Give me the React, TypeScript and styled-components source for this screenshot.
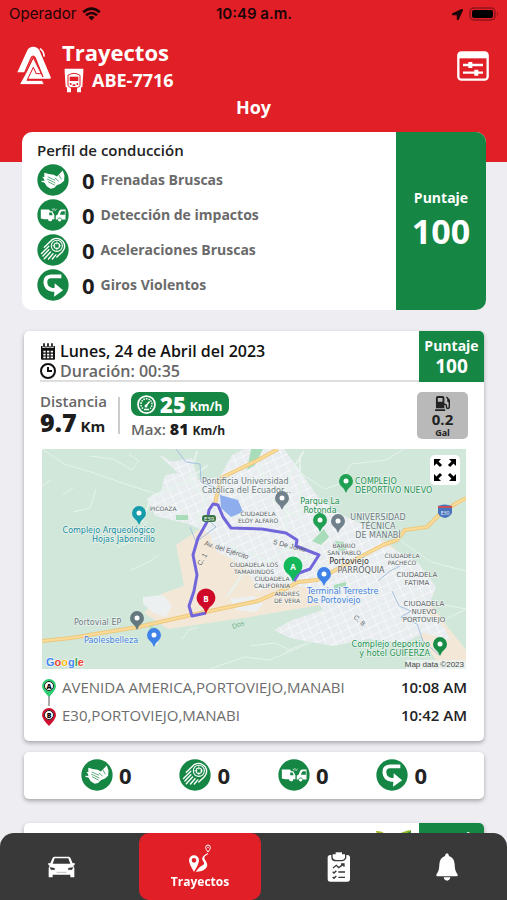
import React from 'react';
import styled, { createGlobalStyle } from 'styled-components';
import { FaLocationArrow, FaGasPump } from 'react-icons/fa';

const GREEN = '#168644';
const RED = '#e11f27';

const GlobalStyle = createGlobalStyle`
  * { box-sizing: border-box; }
  body {
    margin: 0;
    background: #ededf2;
    color: #222;
    font-family: "Open Sans", "Noto Sans", sans-serif;
  }
  h1, h2, p, ul, ol { margin: 0; padding: 0; list-style: none; }
  button { font: inherit; border: 0; padding: 0; background: none; cursor: pointer; }
  svg { display: block; flex: none; }
`;

const Header = styled.header`
  height: 162px;
  background: ${RED};
  color: #fff;
`;

const StatusBar = styled.div`
  display: grid;
  grid-template-columns: 1fr auto 1fr;
  align-items: center;
  height: 28px;
  padding: 0 8px 0 9px;
  color: #1c0506;
  font: 400 15px/28px Inter, sans-serif;
`;

const StatusGroup = styled.div<{ $end?: boolean }>`
  display: flex;
  align-items: center;
  gap: 6px;
  justify-content: ${(p) => (p.$end ? 'flex-end' : 'flex-start')};
`;

const Clock = styled.time`
  font-weight: 600;
`;

const TitleBar = styled.div`
  display: flex;
  align-items: center;
  gap: 11px;
  height: 68px;
  padding: 8px 18px 0 17px;
`;

const TitleText = styled.div`
  flex: 1;
`;

const Title = styled.h1`
  font-size: 22px;
  line-height: 28px;
  font-weight: 700;
`;

const Plate = styled.p`
  display: flex;
  align-items: center;
  gap: 8px;
  padding-left: 2px;
  font-size: 18px;
  line-height: 28px;
  font-weight: 700;
`;

const DayLabel = styled.p`
  text-align: center;
  font-size: 18px;
  line-height: 22px;
  font-weight: 700;
`;

const Main = styled.main`
  display: flex;
  flex-direction: column;
  margin-top: -30px;
  padding: 0 23px 20px 24px;
`;

const ProfileCard = styled.section`
  display: grid;
  grid-template-columns: 1fr 90px;
  margin: 0 -2px 21px;
  border-radius: 10px;
  background: #fff;
  overflow: hidden;
`;

const ProfileBody = styled.div`
  padding: 8px 15px 9px;
`;

const ProfileTitle = styled.h2`
  margin-bottom: 4px;
  font-size: 15px;
  line-height: 20px;
  font-weight: 600;
`;

const EventList = styled.ul`
  display: grid;
  gap: 3px;
`;

const EventRow = styled.li`
  display: flex;
  align-items: center;
  font-size: 14px;
  line-height: 32px;
  font-weight: 700;
  color: #6a6a6a;
`;

const Count = styled.span`
  margin: 0 6px 0 13px;
  color: #1d1d1d;
  font-size: 22px;
  line-height: 32px;
  font-weight: 700;
`;

const Score = styled.div<{ $large?: boolean }>`
  display: flex;
  flex-direction: column;
  align-items: center;
  justify-content: center;
  padding-bottom: ${(p) => (p.$large ? 4 : 2)}px;
  background: ${GREEN};
  color: #fff;
  font-weight: 700;
  font-size: 14px;
  line-height: ${(p) => (p.$large ? 24 : 20)}px;
`;

const ScoreValue = styled.strong<{ $large?: boolean }>`
  font-weight: 700;
  font-size: ${(p) => (p.$large ? 34 : 19)}px;
  line-height: ${(p) => (p.$large ? 42 : 20)}px;
`;

const Card = styled.section`
  border-radius: 5px;
  background: #fff;
  box-shadow: 0 2px 4px rgba(0, 0, 0, 0.3);
  overflow: hidden;
`;

const TripHead = styled.div`
  display: grid;
  grid-template-columns: 1fr 65px;
  grid-template-rows: 51px;
`;

const TripDate = styled.div`
  margin-left: 16px;
  padding-top: 10px;
  border-bottom: 2px solid #dedede;
`;

const HeadLine = styled.p<{ $muted?: boolean }>`
  display: flex;
  align-items: center;
  gap: 4px;
  font-size: 16px;
  line-height: 20px;
  font-weight: 600;
  color: ${(p) => (p.$muted ? '#666' : '#111')};
`;

const Metrics = styled.div`
  display: flex;
  align-items: flex-start;
  height: 67px;
  padding: 10px 16px 0;
`;

const Distance = styled.div`
  padding-right: 11px;
  color: #666;
  font-size: 15px;
  line-height: 19px;
  font-weight: 600;
`;

const Divider = styled.span`
  width: 2px;
  height: 37px;
  margin: 5px 11px 0 0;
  background: #ccc;
`;

const Reading = styled.p`
  color: #1d1d1d;
  font-size: 15px;
  line-height: 22px;
  font-weight: 700;
  strong { font-size: 25px; font-weight: 800; }
`;

const Speeds = styled.div`
  display: flex;
  flex: 1;
  flex-direction: column;
  align-items: flex-start;
  color: #666;
  font-size: 15px;
  font-weight: 600;
`;

const SpeedPill = styled.p`
  display: flex;
  align-items: center;
  gap: 4px;
  height: 24px;
  padding: 0 7px 0 6px;
  border-radius: 8px;
  background: ${GREEN};
  color: #fff;
  font-size: 12px;
  line-height: 24px;
  font-weight: 700;
  strong { font-size: 22px; font-weight: 800; }
  span { padding-top: 6px; }
`;

const MaxSpeed = styled.p`
  line-height: 26px;
  strong { color: #1d1d1d; font-size: 16px; font-weight: 800; }
  span { color: #222; font-size: 12px; font-weight: 700; }
`;

const Fuel = styled.div`
  display: flex;
  flex-direction: column;
  align-items: center;
  width: 51px;
  height: 47px;
  padding-top: 4px;
  border-radius: 5px;
  background: #b9b9b9;
  color: #222;
  font-size: 9px;
  line-height: 10px;
  font-weight: 700;
  strong { font-size: 15px; line-height: 17px; font-weight: 700; }
`;

const MapFrame = styled.div`
  position: relative;
  margin: 0 18px;
`;

const ExpandButton = styled.button`
  position: absolute;
  top: 6px;
  right: 6px;
  width: 30px;
  height: 30px;
  border-radius: 5px;
  background: #fff;
`;

const Stops = styled.div`
  display: flex;
  gap: 5px;
  padding: 6px 17px 14px 17px;
`;

const StopList = styled.ol`
  flex: 1;
  color: #6d6d6d;
  font-size: 15px;
  line-height: 28px;
  margin: -2px 0;
`;

const Stop = styled.li`
  display: flex;
  justify-content: space-between;
  time { color: #222; font-weight: 600; }
`;

const EventStrip = styled(Card)`
  display: flex;
  justify-content: space-between;
  margin: 11px 0 24px;
  padding: 7px 57px 8px;
`;

const EventTotal = styled.div`
  display: flex;
  align-items: center;
  gap: 6px;
  font-size: 22px;
  line-height: 32px;
  font-weight: 700;
`;

const LeafSlot = styled.div`
  display: flex;
  justify-content: flex-end;
  padding: 4px 6px 0 0;
`;

const TabBar = styled.nav`
  position: fixed;
  left: 0;
  right: 0;
  bottom: 0;
  display: grid;
  grid-template-columns: 122fr 156fr 122fr 94fr;
  height: 67px;
  padding-right: 13px;
  border-radius: 14px 14px 0 0;
  background: #393939;
`;

const Tab = styled.button<{ $active?: boolean }>`
  display: flex;
  flex-direction: column;
  align-items: center;
  justify-content: center;
  gap: 2px;
  margin: ${(p) => (p.$active ? '0 17px' : '0')};
  border-radius: 10px;
  background: ${(p) => (p.$active ? RED : 'transparent')};
  color: #fff;
  font-size: 12px;
  line-height: 16px;
  font-weight: 700;
`;

type EventKind = 'brake' | 'impact' | 'accel' | 'turn';

const glyphs: Record<EventKind, React.ReactNode> = {
  brake: (
    <>
      <path d="M21 25l13 4 14 2 9 5 8-8 9-9 5 14-1 15-9 8-12 5-8 8-10 2-11-7-5-9-3-12-5-6 6 1z" fill="#fff" />
      <path d="M31 37l21 10M29 43l24 12M32 51l19 10M51 40l11 9M63 31l7 13" stroke={GREEN} strokeWidth="2" fill="none" />
      <path d="M13 50l9 1 8 10 8 3" stroke="#fff" strokeWidth="4" fill="none" />
    </>
  ),
  impact: (
    <>
      <path d="M11 30h23l5 5h5l6 12v11h-6a6 6 0 0 1-12 0H21l-10-2z" fill="#fff" />
      <path d="M35 39h7l3 8H35z" fill={GREEN} />
      <path d="M82 30H70q-5 0-7 5l-3 9-6 4v11h5a6 6 0 0 1 12 0h11z" fill="#fff" />
      <path d="M80 35h-8q-3 0-5 7l-1 3h14z" fill={GREEN} />
      <circle cx="38" cy="59" r="5" fill="#fff" /><circle cx="65" cy="60" r="5" fill="#fff" />
      <path d="M43 28l3 5M49 26v7M56 28l-4 6" stroke="#fff" strokeWidth="2" />
    </>
  ),
  accel: (
    <g fill="none" stroke="#fff" strokeWidth="4" strokeLinecap="round">
      <path d="M44 16q18-9 31 6 10 15-2 29L57 66M44 16L21 38M34 35L13 56M34 45L17 63M39 52L21 71M46 57L33 72M54 60L44 72" />
      <circle cx="57" cy="34" r="16" strokeWidth="3" />
      <circle cx="57" cy="34" r="8" strokeWidth="3" />
      <path d="M57 22v7M57 39v7M45 34h7M62 34h7" strokeWidth="2" />
    </g>
  ),
  turn: (
    <>
      <path d="M70 21H40Q23 22 24 39q2 19 20 21h13" stroke="#fff" strokeWidth="11" fill="none" />
      <path d="M51 41l24 20-26 19z" fill="#fff" />
    </>
  ),
};

const EventIcon = ({ kind }: { kind: EventKind }) => (
  <svg width="32" height="32" viewBox="0 0 92 92" aria-hidden="true">
    <circle cx="46" cy="46" r="45" fill={GREEN} />
    {glyphs[kind]}
  </svg>
);

const WifiIcon = () => (
  <svg width="19" height="14" viewBox="0 0 19 14" fill="none" stroke="currentColor" strokeWidth="2.6" aria-hidden="true">
    <path d="M1.2 5.2q8.3-7 16.6 0M4 8.2q5.500-4.400 11 0" />
    <path d="M6.300 10.100q3.200-2.300 6.400 0L9.500 13.400z" fill="currentColor" stroke="none" />
  </svg>
);

const BatteryIcon = () => (
  <svg width="30" height="14" viewBox="0 0 30 14" aria-hidden="true">
    <rect x="1" y="1" width="25" height="12" rx="4" fill="none" stroke="#90161c" strokeWidth="1.500" />
    <rect x="3" y="3" width="21" height="8" rx="2" fill="#000" />
    <path d="M28 5q2 2 0 4z" fill="#90161c" />
  </svg>
);

const Logo = () => (
  <svg width="34" height="40" viewBox="0 0 102 120" aria-hidden="true">
    <path d="M1 79L31 13Q36 2 49 2q12 0 18 11l34 80q2 5-3 5H33L49 65l8 19h16L53 35q-3-7-7 0L25 79z" fill="#fff" />
    <path d="M20 87L43 35q5-9 11 0l24 58" fill="none" stroke={RED} strokeWidth="4" />
    <path d="M26 82L49 35l24 48H58L49 64 30 103h46l6 13H12q-4 0-3-4z" fill="#fff" stroke={RED} strokeWidth="3" />
    <path d="M69 8q13 9 12 24" stroke="#fff" strokeWidth="5" fill="none" />
  </svg>
);

const BusIcon = () => (
  <svg width="20" height="25" viewBox="0 0 60 75" aria-hidden="true">
    <path d="M2 2h56v10l-3 46H5L2 12zM9 58h12v15H9zM39 58h12v15H39z" fill="#fff" />
    <path d="M12 22q18-12 36 0v31l-7 6H19l-7-6z" fill="#fff" stroke={RED} strokeWidth="3" />
    <path d="M17 26h26v13H17z" fill={RED} />
    <circle cx="20" cy="48" r="3" fill={RED} /><circle cx="40" cy="48" r="3" fill={RED} />
    <path d="M26 49h8v5h-8z" fill={RED} />
  </svg>
);

const FilterIcon = () => (
  <svg width="32" height="30" viewBox="0 0 96 90" fill="none" stroke="#fff" aria-hidden="true">
    <rect x="4" y="4" width="88" height="82" rx="9" strokeWidth="7" />
    <path d="M5 13h86" strokeWidth="18" />
    <path d="M18 42h60M18 65h60" strokeWidth="7" />
    <path d="M40 33v18M58 56v18" strokeWidth="12" />
  </svg>
);

const CalendarIcon = () => (
  <svg width="16" height="17" viewBox="0 0 48 51" aria-hidden="true">
    <path d="M3 9h42v38q0 3-3 3H6q-3 0-3-3z" fill="#111" />
    <path d="M12 2v13M24 2v13M36 2v13" stroke="#fff" strokeWidth="9" />
    <path d="M12 1v12M24 1v12M36 1v12" stroke="#111" strokeWidth="5" />
    <path d="M10 26h7M21 26h7M32 26h7M10 35h7M21 35h7M32 35h7M10 43h7M21 43h7M32 43h7" stroke="#fff" strokeWidth="5" />
  </svg>
);

const ClockIcon = () => (
  <svg width="16" height="16" viewBox="0 0 16 16" fill="none" stroke="#111" strokeWidth="2" aria-hidden="true">
    <circle cx="8" cy="8" r="7" /><path d="M8 4v4h4" />
  </svg>
);

const GaugeIcon = () => (
  <svg width="19" height="19" viewBox="0 0 38 38" fill="none" stroke="#fff" aria-hidden="true">
    <circle cx="19" cy="19" r="17" strokeWidth="3.500" />
    <path d="M12 27a11 11 0 1 1 14 0" strokeWidth="3" strokeDasharray="3 2" />
    <path d="M17 23l8-10" strokeWidth="3" /><circle cx="18" cy="22" r="3" fill="#fff" stroke="none" />
    <path d="M14 29h10" strokeWidth="3" />
  </svg>
);

const ExpandIcon = () => (
  <svg width="30" height="30" viewBox="0 0 30 30" fill="#000" stroke="#000" strokeWidth="3" aria-hidden="true">
    {[0, 90, 180, 270].map((a) => (
      <g key={a} transform={`rotate(${a} 15 15)`}>
        <path d="M4 4h7L4 11z" stroke="none" /><path d="M6 6l5 5" />
      </g>
    ))}
  </svg>
);

const CarIcon = () => (
  <svg width="27" height="22" viewBox="0 0 81 66" fill="#fff" aria-hidden="true">
    <path d="M18 2h45l4 3 7 17 6-1v6l-4 2 3 7v26q0 2-2 2h-8q-2 0-2-2v-6H14v6q0 2-2 2H4q-2 0-2-2V36l3-7-4-2v-6l6 1 7-17z" />
    <path d="M20 7h41l6 16H14z" fill="#393939" />
    <path d="M6 34l14 3v4H9zM75 34l-14 3v4h11zM26 49h29" fill="#393939" stroke="#393939" strokeWidth="1" />
  </svg>
);

const RouteIcon = () => (
  <svg width="24" height="28" viewBox="0 0 72 84" fill="#fff" aria-hidden="true">
    <path d="M18 34a15 15 0 0 1 15 15q0 12-15 34Q3 61 3 49a15 15 0 0 1 15-15zm0 8a7 7 0 1 0 0 14 7 7 0 0 0 0-14z" fillRule="evenodd" />
    <path d="M23 83q13-16 21-19 8-5 1-13-7-9 5-18l9-6 2 2-10 8q-5 5 0 10 13 17 1 27-8 9-29 9z" />
    <path d="M60 3a7 7 0 0 1 7 7q0 6-7 14-7-8-7-14a7 7 0 0 1 7-7z" fill="none" stroke="#fff" strokeWidth="3" />
    <circle cx="60" cy="10" r="2" />
  </svg>
);

const ReportIcon = () => (
  <svg width="24" height="30" viewBox="0 0 72 90" aria-hidden="true">
    <rect x="2" y="9" width="67" height="80" rx="8" fill="#fff" />
    <path d="M15 5h41v13q-4 8-12 8H27q-10 0-12-8z" fill="#fff" stroke="#393939" strokeWidth="4" />
    <path d="M26 1h19v8H26z" fill="#fff" />
    <path d="M18 48l10-8 7 7 14-10M42 36h9v8M17 59l4 4 7-7M34 60h20M17 75l4 4 7-7M34 76h20" fill="none" stroke="#393939" strokeWidth="4" />
  </svg>
);

const BellIcon = () => (
  <svg width="22" height="28" viewBox="0 0 66 84" fill="#fff" aria-hidden="true">
    <path d="M33 1q5 0 6 8 16 5 17 25 0 20 8 29 3 6-2 7H4q-5-1-2-7 8-9 8-29Q11 14 27 9q1-8 6-8zM23 73h20q-2 10-10 10t-10-10z" />
  </svg>
);

const StopMarkers = () => (
  <svg width="16" height="52" viewBox="0 0 16 52" aria-hidden="true">
    <path d="M8 18v13" stroke="#555" strokeWidth="1" />
    {[{ y: 4, c: '#2ecc71', t: 'A' }, { y: 33, c: '#cf1030', t: 'B' }].map((m) => (
      <g key={m.t} transform={`translate(0 ${m.y})`}>
        <path d="M8 0a7 7 0 0 1 7 7q0 4-7 11Q1 11 1 7a7 7 0 0 1 7-7z" fill={m.c} />
        <circle cx="8" cy="7" r="4.500" fill="#fff" stroke="#222" strokeWidth="1" />
        <text x="8" y="10" textAnchor="middle" fontSize="7" fontWeight="800" fill="#000">{m.t}</text>
      </g>
    ))}
  </svg>
);

const LeafIcon = () => (
  <svg width="38" height="30" viewBox="0 0 38 30" aria-hidden="true">
    <path d="M18 15q1-9 18-12-1 12-14 15z" fill="#8dbb25" /><path d="M24 15q6-8 12-11-1 12-12 13z" fill="#23823b" />
    <path d="M1 4q11-1 12 11Q3 14 1 4z" fill="#a8b52c" />
  </svg>
);

const Pin = ({ x, y, color, size = 1, letter }: { x: number; y: number; color: string; size?: number; letter?: string }) => (
  <g transform={`translate(${x} ${y}) scale(${size})`}>
    <path d="M0 0Q-1-4-5-7a7 7 0 1 1 10 0Q1-4 0 0z" fill={color} />
    {letter ? <text y="-9" textAnchor="middle" fontSize="6" fontWeight="700" fill="#fff">{letter}</text> : <circle cy="-12" r="2.500" fill="#fff" />}
  </g>
);

type Label = { x: number; y: number; lines: string[]; color?: string; size?: number; anchor?: 'start' | 'middle' | 'end' };

const GREY = '#6c7a80';
const DARK = '#5e6468';
const BLUE = '#3f82e0';
const PARK = '#1f9252';

const labels: Label[] = [
  { x: 160, y: 35, lines: ['Pontificia Universidad', 'Católica del Ecuador...'], color: GREY },
  { x: 113, y: 84, lines: ['Complejo Arqueológico', 'Hojas Jaboncillo'], color: '#168c9b', anchor: 'end' },
  { x: 108, y: 62, lines: ['PICOAZA'], size: 6 },
  { x: 216, y: 67, lines: ['CIUDADELA', 'ELOY ALFARO'], size: 6, anchor: 'middle' },
  { x: 313, y: 35, lines: ['COMPLEJO', 'DEPORTIVO NUEVO'], color: PARK },
  { x: 278, y: 55, lines: ['Parque La', 'Rotonda'], color: PARK, anchor: 'middle' },
  { x: 336, y: 71, lines: ['UNIVERSIDAD', 'TÉCNICA', 'DE MANABÍ'], color: GREY, anchor: 'middle' },
  { x: 302, y: 99, lines: ['BARRIO', 'SAN PABLO'], size: 6, anchor: 'middle' },
  { x: 307, y: 115, lines: ['Portoviejo'], color: '#333', anchor: 'middle' },
  { x: 319, y: 124, lines: ['PARROQUIA'], anchor: 'middle' },
  { x: 360, y: 109, lines: ['CIUDADELA', 'PACHECO'], size: 6, anchor: 'middle' },
  { x: 375, y: 128, lines: ['CIUDADELA', 'FATIMA'], size: 7, anchor: 'middle' },
  { x: 382, y: 157, lines: ['CIUDADELA', 'NUEVO', 'PORTOVIEJO'], size: 7, anchor: 'middle' },
  { x: 212, y: 118, lines: ['CIUDADELA LOS', 'TAMARINDOS'], size: 6, anchor: 'middle' },
  { x: 230, y: 132, lines: ['CIUDADELA', 'CALIFORNIA'], size: 6, anchor: 'middle' },
  { x: 245, y: 147, lines: ['ANDRES', 'DE VERA'], size: 6, anchor: 'middle' },
  { x: 265, y: 145, lines: ['Terminal Terrestre', 'De Portoviejo'], color: BLUE },
  { x: 32, y: 176, lines: ['Portovial EP'], color: GREY },
  { x: 42, y: 194, lines: ['Paolesbelleza'], color: BLUE },
  { x: 388, y: 198, lines: ['Complejo deportivo', 'y hotel GUIFERZA'], color: PARK, anchor: 'end' },
];

const URBAN = 'M116 5l14 8 20-4 6 22 22-3 12-22 12-6h40l16 22 18 26 22 17 30 14 16 17 32 18 18 24-10 25 18 15 6 13-26-7-20 10-36-4-35 7-43-8-16-8 18-10 31-10-15-23-28-4-22 8-14-26-28-14-7-18-20-9-34-8-8-17 14-8 4-16 13-2z';
const HIGHWAY = 'M0 192l29-3 67-11 53-12 67-14 25-11 15-8 19-2 43-23 23-12 14-5 8-10 22-3 12-12 16-11 11-6M173 55l3-15 3-11 37-18 20-11';

const RouteMap = () => (
  <svg width="100%" height="220" viewBox="0 0 424 220" preserveAspectRatio="xMidYMid slice" role="img" aria-label="Mapa del trayecto">
    <defs>
      <pattern id="streets" width="9" height="8" patternUnits="userSpaceOnUse" patternTransform="rotate(-24)">
        <path d="M0 0h9M0 0v8" stroke="#fff" strokeWidth="1" />
      </pattern>
    </defs>
    <rect width="424" height="220" fill="#d0e7da" />
    <path d="M134 96l30-20 100 3 80 13 22 20 17 35 22 30 19 24v16l-28-3-18-27-44-7-56-24-70 12-82 12-24-16 17-19 23-8z" fill="#f3e8d8" />
    <path d={URBAN} fill="#e9edf0" />
    <path d={URBAN} fill="url(#streets)" />
    <path d="M101 148l20-2 9 11-6 11-12-4-11-9zM188 150l24-3 9 8-7 8-20-2zM108 181l10 2-3 14-6-6z" fill="#edf0f1" />
    <path d="M209 0h12l-8 16-8 5zM270 92l12-12 5 8-8 8zM134 66h12v5h-12zM293 92l9 1 3 8-8 1zM292 136l12-3v4l-12 3zM108 177l7 2-2 8-6-4z" fill="#a9ddb9" />
    <g fill="none" stroke="#e6f3ec" strokeWidth="1">
      <path d="M0 0l22 15 30 9 34 12 32 10M48 7l23 3 19 11 7-9-10-7M54 40l-6 19-17 4M31 39l-10 7M9 31l-9 6M75 98l17-6 13-20M89 121l16-7 12-8M140 190l7-9 9-3M258 24l25 16 14-5 12-20 35-4 18-11M359 92l30 21 35 9M346 96l9 30 31 27 38 7M322 121l22 46 30 20M208 197l25-3 17 8M168 220l34-12 26 3 44-19M370 168l28 5 26-13M279 178l-17 17-18 7" />
      <path d="M166 16l-26 19-30 12-10 26M155 2l-8 29 17 18-10 29M217 17l13 33 27 20M206 103l22 10 17-14 35 18M189 92l15 27-18 28M243 79l4-53 15-24M258 8v62" strokeWidth="2" />
    </g>
    <path d="M134 0l10 13 14 2 1 18 15 6 6 10M148 78l6 15 20-15-10-9M336 132l12-10 10-5M350 142l7 15 12 5-10 6 16 7 6 17 16 14" fill="none" stroke="#a5c1df" strokeWidth="1" />
    <path d="M178 46l18 5 5 12-12 5-10-9z" fill="#8dadec" />
    <path d={HIGHWAY} fill="none" stroke="#edc87f" strokeWidth="4" strokeLinejoin="round" />
    <path d={HIGHWAY} fill="none" stroke="#fadb97" strokeWidth="2" />
    <path d="M252 132l5-8 11-4 9-14-23-9 1-6-11-7-24-4-31-1-8-11-5-12-5-1-4 6-2 12-9 16-5 17 4 20-3 16-5 15 3 10 14-3" fill="none" stroke="#7267da" strokeWidth="3" strokeLinejoin="round" />
    <rect x="160" y="66" width="14" height="7" rx="3" fill="#397546" />
    <text x="167" y="72" fontSize="6" textAnchor="middle" fill="#fff">E39</text>
    <path d="M396 57q6-3 14 0v7q-2 4-7 5-6-1-7-5z" fill="#4674bd" /><path d="M396 58h14" stroke="#c65059" strokeWidth="2" />
    <text x="403" y="66" fontSize="5" textAnchor="middle" fill="#fff">E30</text>
    <g fill={DARK} fontSize="7" fontFamily="Liberation Sans, sans-serif">
      <text transform="translate(162 96) rotate(18)">Av. del Ejército</text>
      <text transform="translate(231 95) rotate(14)">5 De Junio</text>
      <text transform="translate(159 117) rotate(-60)">C. 1</text>
      <text transform="translate(311 169) rotate(40)">C. 8</text>
      <text transform="translate(191 180) rotate(-20)" fill="#74b48a">Dos</text>
    </g>
    {labels.map((l) => {
      const size = l.size ?? 8;
      return (
        <g key={l.lines.join(' ')} fill={l.color ?? DARK} stroke="#f4f8f7" strokeWidth="1.500" strokeOpacity=".7" paintOrder="stroke"
          fontSize={size} textAnchor={l.anchor ?? 'start'} fontFamily="DejaVu Sans, sans-serif">
          {l.lines.map((line, i) => (
            <text key={line} x={l.x} y={l.y + i * (size + 1)}>{line}</text>
          ))}
        </g>
      );
    })}
    <Pin x={97} y={76} color="#159baa" />
    <Pin x={240} y={61} color="#70818c" />
    <Pin x={304} y={44} color="#20a052" />
    <Pin x={278} y={83} color="#20a052" />
    <Pin x={296} y={84} color="#70818c" />
    <Pin x={282} y={137} color="#3f82e8" />
    <Pin x={95} y={181} color="#647880" />
    <Pin x={112} y={198} color="#3f82e8" />
    <Pin x={398} y={207} color="#178d48" />
    <Pin x={251} y={133} color="#12b85a" size={1.35} letter="A" />
    <Pin x={164} y={165} color="#cf0928" size={1.35} letter="B" />
    <text x="4" y="217" fontSize="11" fontFamily="Liberation Sans, sans-serif" fontWeight="700" stroke="#fff" strokeWidth="1" paintOrder="stroke">
      <tspan fill="#4285f4">G</tspan><tspan fill="#ea4335">o</tspan><tspan fill="#fbbc05">o</tspan><tspan fill="#4285f4">g</tspan><tspan fill="#34a853">l</tspan><tspan fill="#ea4335">e</tspan>
    </text>
    <rect x="364" y="211" width="60" height="9" fill="#edf4f0" opacity=".8" />
    <text x="422" y="218" fontSize="8" textAnchor="end" fill="#444" fontFamily="Liberation Sans, sans-serif">Map data ©2023</text>
  </svg>
);

const profile: { kind: EventKind; label: string; count: number }[] = [
  { kind: 'brake', label: 'Frenadas Bruscas', count: 0 },
  { kind: 'impact', label: 'Detección de impactos', count: 0 },
  { kind: 'accel', label: 'Aceleraciones Bruscas', count: 0 },
  { kind: 'turn', label: 'Giros Violentos', count: 0 },
];

const tripEvents: EventKind[] = ['brake', 'accel', 'impact', 'turn'];

export default function App() {
  return (
    <>
      <GlobalStyle />
      <Header>
        <StatusBar>
          <StatusGroup>Operador <WifiIcon /></StatusGroup>
          <Clock>10:49 a.m.</Clock>
          <StatusGroup $end><FaLocationArrow size={11} /><BatteryIcon /></StatusGroup>
        </StatusBar>
        <TitleBar>
          <Logo />
          <TitleText>
            <Title>Trayectos</Title>
            <Plate><BusIcon />ABE-7716</Plate>
          </TitleText>
          <button aria-label="Filtros"><FilterIcon /></button>
        </TitleBar>
        <DayLabel>Hoy</DayLabel>
      </Header>
      <Main>
        <ProfileCard>
          <ProfileBody>
            <ProfileTitle>Perfil de conducción</ProfileTitle>
            <EventList>
              {profile.map((e) => (
                <EventRow key={e.kind}><EventIcon kind={e.kind} /><Count>{e.count}</Count>{e.label}</EventRow>
              ))}
            </EventList>
          </ProfileBody>
          <Score $large>Puntaje<ScoreValue $large>100</ScoreValue></Score>
        </ProfileCard>
        <Card>
          <TripHead>
            <TripDate>
              <HeadLine><CalendarIcon />Lunes, 24 de Abril del 2023</HeadLine>
              <HeadLine $muted><ClockIcon />Duración: 00:35</HeadLine>
            </TripDate>
            <Score>Puntaje<ScoreValue>100</ScoreValue></Score>
          </TripHead>
          <Metrics>
            <Distance>Distancia<Reading><strong>9.7</strong> Km</Reading></Distance>
            <Divider />
            <Speeds>
              <SpeedPill><GaugeIcon /><strong>25</strong><span>Km/h</span></SpeedPill>
              <MaxSpeed>Max: <strong>81</strong> <span>Km/h</span></MaxSpeed>
            </Speeds>
            <Fuel><FaGasPump size={15} /><strong>0.2</strong>Gal</Fuel>
          </Metrics>
          <MapFrame>
            <RouteMap />
            <ExpandButton aria-label="Ampliar mapa"><ExpandIcon /></ExpandButton>
          </MapFrame>
          <Stops>
            <StopMarkers />
            <StopList>
              <Stop>AVENIDA AMERICA,PORTOVIEJO,MANABI<time>10:08 AM</time></Stop>
              <Stop>E30,PORTOVIEJO,MANABI<time>10:42 AM</time></Stop>
            </StopList>
          </Stops>
        </Card>
        <EventStrip>
          {tripEvents.map((kind) => (
            <EventTotal key={kind}><EventIcon kind={kind} />0</EventTotal>
          ))}
        </EventStrip>
        <Card>
          <TripHead>
            <LeafSlot><LeafIcon /></LeafSlot>
            <Score>Puntaje<ScoreValue>100</ScoreValue></Score>
          </TripHead>
        </Card>
      </Main>
      <TabBar>
        <Tab aria-label="Vehículos"><CarIcon /></Tab>
        <Tab $active aria-current="page"><RouteIcon />Trayectos</Tab>
        <Tab aria-label="Reportes"><ReportIcon /></Tab>
        <Tab aria-label="Notificaciones"><BellIcon /></Tab>
      </TabBar>
    </>
  );
}
